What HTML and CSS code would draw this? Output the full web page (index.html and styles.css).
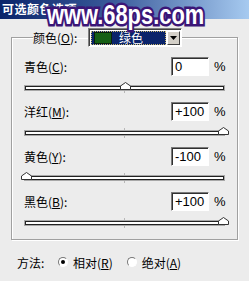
FILE: index.html
```html
<!DOCTYPE html>
<html lang="zh-CN">

<head>
    <meta charset="UTF-8">
    <meta name="viewport" content="width=device-width, initial-scale=1.0">
    <title>可选颜色选项</title>
    <link rel="stylesheet" href="styles.css">
</head>

<body>

    <!-- Window title bar -->
    <div class="titlebar">可选颜色选项</div>

    <!-- Site watermark over the title bar -->
    <div class="watermark">www.68ps.com</div>

    <div class="dialog">
        <fieldset class="group">
            <legend class="group-legend">
                <span class="legend-label">颜色(<u>O</u>):</span>
                <span class="select">
                    <span class="select-value">
                        <span class="swatch"></span>
                        <span class="select-text">绿色</span>
                    </span>
                    <span class="select-arrow">
                        <svg width="7" height="4" viewBox="0 0 7 4">
                            <polygon points="0,0 7,0 3.5,4" fill="#000" />
                        </svg>
                    </span>
                </span>
            </legend>

            <!-- Cyan -->
            <div class="channel">
                <div class="row">
                    <span class="row-label">青色(<u>C</u>):</span>
                    <span class="field">0</span>
                    <span class="unit">%</span>
                </div>
                <div class="track">
                    <span class="thumb" style="left: 50%"></span>
                </div>
            </div>

            <!-- Magenta -->
            <div class="channel">
                <div class="row">
                    <span class="row-label">洋红(<u>M</u>):</span>
                    <span class="field">+100</span>
                    <span class="unit">%</span>
                </div>
                <div class="track">
                    <span class="thumb" style="left: 100%"></span>
                </div>
            </div>

            <!-- Yellow -->
            <div class="channel">
                <div class="row">
                    <span class="row-label">黄色(<u>Y</u>):</span>
                    <span class="field">-100</span>
                    <span class="unit">%</span>
                </div>
                <div class="track">
                    <span class="thumb" style="left: 0%"></span>
                </div>
            </div>

            <!-- Black -->
            <div class="channel">
                <div class="row">
                    <span class="row-label">黑色(<u>B</u>):</span>
                    <span class="field">+100</span>
                    <span class="unit">%</span>
                </div>
                <div class="track">
                    <span class="thumb" style="left: 100%"></span>
                </div>
            </div>
        </fieldset>

        <!-- Method radios -->
        <div class="method">
            <span class="method-label">方法:</span>
            <span class="radio checked"></span>
            <span class="radio-text">相对(<u>R</u>)</span>
            <span class="radio"></span>
            <span class="radio-text">绝对(<u>A</u>)</span>
        </div>
    </div>

</body>

</html>
```

FILE: styles.css
```css
/* Page as a dialog window */
body {
    margin: 0;
    width: 249px;
    height: 281px;
    background: #ececec;
    font-family: 'Noto Sans CJK SC', 'Liberation Sans', sans-serif;
    font-size: 12px;
    color: #000;
    position: relative;
    overflow: hidden;
}

u {
    text-decoration: underline;
    text-underline-offset: 1px;
}

/* Title bar */
.titlebar {
    height: 19px;
    line-height: 18px;
    padding-left: 2px;
    background: linear-gradient(90deg, #0a246a 0%, #3a5a9a 45%, #a6caf0 100%);
    color: #fff;
    font-weight: bold;
    font-size: 12px;
    letter-spacing: 0.5px;
}

/* Watermark text lying over the title bar */
.watermark {
    position: absolute;
    left: 47px;
    top: 0;
    font-family: 'Liberation Sans', Arial, sans-serif;
    font-weight: bold;
    font-size: 27px;
    line-height: 30px;
    color: #fff;
    -webkit-text-stroke: 5px #3b1677;
    paint-order: stroke fill;
    transform: scaleX(0.81);
    transform-origin: left top;
    white-space: nowrap;
}

.dialog {
    padding-top: 9px;
}

/* Group box with etched border */
.group {
    margin: 0 0 0 11px;
    width: 227px;
    box-sizing: border-box;
    padding: 0 13px 12px 12px;
    border: 1px solid #a0a0a0;
    box-shadow: 1px 1px 0 #fff, inset 1px 1px 0 #fff;
}

.group-legend {
    margin-left: 9px;
    padding: 0;
    display: flex;
    align-items: center;
}

.legend-label {
    width: 55px;
}

/* Dropdown */
.select {
    display: flex;
    width: 94px;
    height: 19px;
    box-sizing: border-box;
    border: 1px solid;
    border-color: #808080 #fff #fff #808080;
    box-shadow: inset 1px 1px 0 #404040;
    background: #fff;
    padding: 2px 1px 1px 2px;
}

.select-value {
    flex: 1;
    display: flex;
    align-items: center;
    background: #0a246a;
    outline: 1px dotted #c8b870;
    outline-offset: -1px;
    padding-left: 3px;
}

.swatch {
    width: 18px;
    height: 12px;
    box-sizing: border-box;
    background: #155f15;
    border: 1px solid #0a200c;
    margin-right: 7px;
}

.select-text {
    color: #fff;
    line-height: 12px;
}

.select-arrow {
    width: 13px;
    display: flex;
    align-items: center;
    justify-content: center;
    background: #d4d0c8;
    border: 1px solid;
    border-color: #fff #404040 #404040 #fff;
    box-sizing: border-box;
    margin-left: 1px;
}

/* Channel rows */
.channel {
    padding-top: 10px;
    height: 35px;
}

.row {
    display: flex;
    align-items: center;
    height: 19px;
}

.row-label {
    flex: 1;
}

.field {
    width: 38px;
    height: 19px;
    box-sizing: border-box;
    border: 1px solid;
    border-color: #7a7a7a #fff #fff #7a7a7a;
    box-shadow: inset 1px 1px 0 #303030;
    background: #fff;
    padding-left: 3px;
    font-family: 'Liberation Sans', Arial, sans-serif;
    font-size: 13px;
    line-height: 17px;
}

.unit {
    width: 10px;
    margin-left: 5px;
    font-family: 'Liberation Sans', Arial, sans-serif;
    font-size: 13px;
    white-space: nowrap;
}

/* Slider */
.track {
    position: relative;
    margin: 10px 0 0 1px;
    width: 197px;
    height: 2px;
    background: #fff;
    border: 1px solid #222;
    box-shadow: 0 0 0 1px #a8a8a8;
}

.track::before,
.track::after {
    content: '';
    position: absolute;
    left: 98px;
    width: 1px;
    height: 2px;
    background: #b8b8b8;
}

.track::before {
    top: -4px;
}

.track::after {
    bottom: -4px;
}

.thumb {
    position: absolute;
    top: -5px;
    width: 11px;
    height: 8px;
    margin-left: -5px;
    background: url("data:image/svg+xml,%3Csvg xmlns='http://www.w3.org/2000/svg' width='11' height='8'%3E%3Cpolygon points='0.5,7.5 0.5,4 5.5,0.5 10.5,4 10.5,7.5' fill='%23fff' stroke='%23333'/%3E%3C/svg%3E") no-repeat;
}

/* Method radios */
.method {
    display: flex;
    align-items: center;
    margin: 15px 0 0 17px;
    height: 14px;
}

.method-label {
    width: 41px;
}

.radio {
    width: 10px;
    height: 10px;
    box-sizing: border-box;
    border-radius: 50%;
    border: 1px solid;
    border-color: #777 #fff #fff #777;
    background: #fff;
    margin-right: 5px;
    display: flex;
    align-items: center;
    justify-content: center;
}

.radio.checked::after {
    content: '';
    width: 4px;
    height: 4px;
    border-radius: 50%;
    background: #000;
}

.radio-text {
    margin-right: 14px;
}
```
